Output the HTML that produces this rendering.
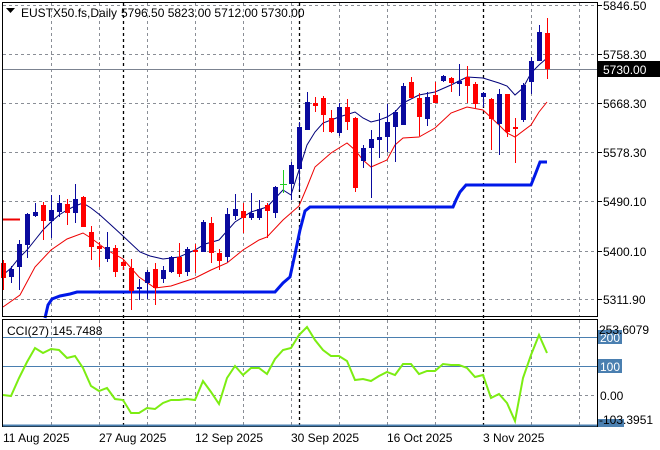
<!DOCTYPE html>
<html><head><meta charset="utf-8"><style>
html,body{margin:0;padding:0;background:#fff;}
svg{display:block;font-family:"Liberation Sans",sans-serif;font-size:12px;}
</style></head><body>
<svg width="660" height="450" xmlns="http://www.w3.org/2000/svg">
<rect width="660" height="450" fill="#fff"/>
<g stroke="#8a8e96" stroke-width="1" stroke-dasharray="3,3" fill="none">
<path d="M3 5.5H597M3 54.5H597M3 103.5H597M3 152.5H597M3 201.5H597M3 251.5H597M3 299.5H597"/>
<path d="M51.5 3V316M99.5 3V316M147.5 3V316M195.5 3V316M243.5 3V316M291.5 3V316M339.5 3V316M387.5 3V316M435.5 3V316M531.5 3V316M579.5 3V316"/>
<path d="M51.5 320V426M99.5 320V426M147.5 320V426M195.5 320V426M243.5 320V426M291.5 320V426M339.5 320V426M387.5 320V426M435.5 320V426M531.5 320V426M579.5 320V426"/>
<path d="M3 395.5H597"/>
</g>
<g stroke="#000" stroke-width="1.3" stroke-dasharray="3,3" fill="none">
<path d="M123.5 3V426M299.5 3V426M483.5 3V426"/>
</g>
<path d="M3 69.5H597" stroke="#7b8290" stroke-width="1"/>
<path d="M3 219.5H20" stroke="#e00" stroke-width="2"/>
<polyline fill="none" stroke="#00007a" stroke-width="1" points="3,275 11,268 19,258 27,250 35,240 43,230 51,222 59,215 67,210 75,206 83,203 91,208 100,215 111,225 123,236 140,252 150,256 163,259 179,257 195,250 205,244 219,240 235,222 251,212 267,207 283,190 291,195 299,170 307,145 315,132 323,123 339,117 355,112 363,118 371,122 379,120 387,117 395,112 403,103 419,95 435,92 451,85 467,77 483,78 499,83 507,86 515,95 523,88 531,73 539,65 547,58"/>
<polyline fill="none" stroke="#e00" stroke-width="1" points="3,307 20,295 35,267 51,250 67,239 83,233 91,238 107,250 123,259 139,277 155,288 171,286 195,278 211,270 227,263 243,250 259,240 267,237 283,220 299,206 307,187 315,167 331,153 347,143 355,150 363,160 371,167 387,160 395,145 403,138 419,137 435,128 451,113 467,107 483,110 499,125 507,133 515,137 531,125 539,112 547,102"/>
<polyline fill="none" stroke="#0018e8" stroke-width="3" points="45,318 48,305 52,299 60,296 70,294 77,292 275,292 283,283 290,277 295,254 300,230 305,211 310,207 453,207 456,200 460,192 466,185 531,185 535,175 540,162 547,162"/>
<g stroke-width="1">
<path stroke="#f00" d="M3.5 260V290M43.5 202V240M67.5 199V225M83.5 196V227M91.5 226V260M99.5 242V267M115.5 245V277M123.5 259V270M131.5 259V310M155.5 263V305M179.5 243V277M195.5 244V273M211.5 217V263M219.5 249V270M243.5 203V233M267.5 203V238M315.5 97V112M323.5 96V132M331.5 110V133M347.5 99V130M355.5 117V192M411.5 77V98M419.5 93V136M435.5 82V103M451.5 77V92M467.5 66V103M475.5 82V108M491.5 98V150M507.5 94V137M515.5 118V163M547.5 18V79"/>
<path stroke="#0a0a9e" d="M11.5 266V283M19.5 240V290M27.5 213V258M35.5 203V217M51.5 195V238M59.5 195V217M75.5 184V223M107.5 232V262M139.5 279V300M147.5 270V299M163.5 266V283M171.5 256V273M187.5 247V276M203.5 220V252M227.5 208V262M235.5 194V220M251.5 193V220M259.5 200V220M275.5 186V218M291.5 162V200M299.5 122V190M307.5 92V130M339.5 103V136M363.5 145V168M371.5 130V198M379.5 113V158M387.5 104V152M395.5 110V162M403.5 83V125M427.5 92V126M443.5 75V82M459.5 64V96M483.5 92V107M499.5 89V155M523.5 83V122M531.5 57V94M539.5 25V61"/>
<path stroke="#2c2" d="M283.5 170V193M280 184.5H287"/>
</g>
<g fill="#f00">
<rect x="1" y="263" width="5" height="15"/><rect x="41" y="205" width="5" height="16"/><rect x="65" y="204" width="5" height="9"/><rect x="81" y="197" width="5" height="30"/><rect x="89" y="232" width="5" height="15"/><rect x="97" y="246" width="5" height="3"/><rect x="113" y="248" width="5" height="24"/><rect x="121" y="262" width="5" height="4"/><rect x="129" y="268" width="5" height="23"/><rect x="153" y="269" width="5" height="19"/><rect x="177" y="257" width="5" height="17"/><rect x="193" y="250" width="5" height="2"/><rect x="209" y="223" width="5" height="30"/><rect x="217" y="253" width="5" height="8"/><rect x="241" y="211" width="5" height="7"/><rect x="265" y="205" width="5" height="6"/><rect x="313" y="103" width="5" height="3"/><rect x="321" y="98" width="5" height="17"/><rect x="329" y="118" width="5" height="14"/><rect x="345" y="107" width="5" height="15"/><rect x="353" y="118" width="5" height="70"/><rect x="409" y="82" width="5" height="16"/><rect x="417" y="98" width="5" height="19"/><rect x="433" y="95" width="5" height="8"/><rect x="449" y="78" width="5" height="5"/><rect x="465" y="77" width="5" height="9"/><rect x="473" y="84" width="5" height="20"/><rect x="489" y="99" width="5" height="20"/><rect x="505" y="94" width="5" height="38"/><rect x="513" y="127" width="5" height="2"/><rect x="545" y="33" width="5" height="36"/>
</g>
<g fill="#0a0a9e">
<rect x="9" y="269" width="5" height="8"/><rect x="17" y="244" width="5" height="23"/><rect x="25" y="214" width="5" height="31"/><rect x="33" y="212" width="5" height="4"/><rect x="49" y="210" width="5" height="11"/><rect x="57" y="203" width="5" height="9"/><rect x="73" y="199" width="5" height="14"/><rect x="105" y="247" width="5" height="12"/><rect x="137" y="287" width="5" height="2"/><rect x="145" y="272" width="5" height="11"/><rect x="161" y="270" width="5" height="9"/><rect x="169" y="257" width="5" height="15"/><rect x="185" y="249" width="5" height="23"/><rect x="201" y="222" width="5" height="30"/><rect x="225" y="214" width="5" height="43"/><rect x="233" y="209" width="5" height="7"/><rect x="249" y="213" width="5" height="5"/><rect x="257" y="209" width="5" height="9"/><rect x="273" y="187" width="5" height="26"/><rect x="289" y="165" width="5" height="19"/><rect x="297" y="127" width="5" height="42"/><rect x="305" y="102" width="5" height="28"/><rect x="337" y="107" width="5" height="26"/><rect x="361" y="148" width="5" height="13"/><rect x="369" y="139" width="5" height="9"/><rect x="377" y="137" width="5" height="3"/><rect x="385" y="122" width="5" height="15"/><rect x="393" y="112" width="5" height="15"/><rect x="401" y="86" width="5" height="39"/><rect x="425" y="97" width="5" height="22"/><rect x="441" y="76" width="5" height="5"/><rect x="457" y="81" width="5" height="3"/><rect x="481" y="93" width="5" height="4"/><rect x="497" y="94" width="5" height="30"/><rect x="521" y="85" width="5" height="35"/><rect x="529" y="61" width="5" height="21"/><rect x="537" y="32" width="5" height="29"/>
</g>
<path d="M3 337.5H597M3 366.5H597" stroke="#4a7fb0" stroke-width="1"/>
<polyline fill="none" stroke="#7ced12" stroke-width="2" points="3,395 11,396 19,378 27,362 35,348 43,353 51,349 59,350 67,358 75,356 83,368 91,386 99,391 107,388 115,399 123,400 131,413 139,413 147,408 155,409 163,403 171,400 179,400 187,399 195,400 203,381 211,392 219,404 227,378 235,366 243,375 251,368 259,368 267,374 275,359 283,350 291,348 299,335 307,327 315,340 323,350 331,356 339,356 347,361 355,380 363,379 371,381 379,376 387,372 395,375 403,364 411,364 419,374 427,371 435,371 443,364 451,365 459,365 467,368 475,377 483,375 491,398 499,394 507,403 515,421 523,378 531,355 539,335 547,353"/>
<rect x="2.5" y="2.5" width="595" height="314" fill="none" stroke="#000"/>
<rect x="2.5" y="319.5" width="595" height="107" fill="none" stroke="#000"/>
<path d="M3 425.5H597" stroke="#4a7fb0" stroke-width="2"/>
<path d="M6 8H15L10.5 13Z" fill="#000"/>
<text x="21" y="17" fill="#000">EUSTX50.fs,Daily</text>
<text x="121" y="17" fill="#000">5796.50 5823.00 5712.00 5730.00</text>
<text x="7" y="335" fill="#000">CCI(27) 145.7488</text>
<g fill="#000">
<path d="M597 5.5H602M597 54.5H602M597 103.5H602M597 152.5H602M597 201.5H602M597 251.5H602M597 299.5H602" stroke="#000"/>
<text x="603" y="10">5846.50</text>
<text x="603" y="59">5758.30</text>
<rect x="598" y="61" width="62" height="16" fill="#000"/>
<text x="603" y="74" fill="#fff">5730.00</text>
<text x="603" y="108">5668.30</text>
<text x="603" y="157">5578.30</text>
<text x="603" y="206">5490.10</text>
<text x="603" y="256">5400.10</text>
<text x="603" y="304">5311.90</text>
<rect x="598" y="330" width="24" height="14" fill="#4a7fb0"/>
<text x="600" y="342" fill="#fff">200</text>
<text x="599" y="334">253.6079</text>
<rect x="598" y="359" width="24" height="14" fill="#4a7fb0"/>
<text x="600" y="371" fill="#fff">100</text>
<text x="600" y="400">0.00</text>
<rect x="598" y="419" width="26" height="8" fill="#4a7fb0"/>
<text x="599" y="424">-103.3951</text>
</g>
<g fill="#000">
<text x="3" y="442">11 Aug 2025</text>
<text x="99" y="442">27 Aug 2025</text>
<text x="195" y="442">12 Sep 2025</text>
<text x="291" y="442">30 Sep 2025</text>
<text x="387" y="442">16 Oct 2025</text>
<text x="483" y="442">3 Nov 2025</text>
</g>
</svg>
</body></html>
